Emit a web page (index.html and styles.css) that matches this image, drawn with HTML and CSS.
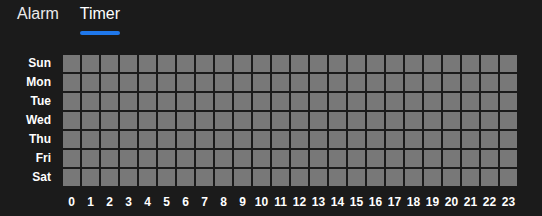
FILE: index.html
```html
<!DOCTYPE html>
<html>
<head>
  <meta charset="UTF-8">
  <meta name="viewport" content="width=device-width, initial-scale=1.0">
  <title>Timer</title>
  <link rel="stylesheet" href="styles.css">
</head>

<body>
  <div class="tabs">
    <div class="tab">Alarm</div>
    <div class="tab active">Timer<span class="tab-bar"></span></div>
  </div>

  <div class="schedule" id="schedule"></div>
  <div class="hours" id="hours"></div>

  <script>
    var days = ["Sun", "Mon", "Tue", "Wed", "Thu", "Fri", "Sat"];
    var schedule = document.getElementById("schedule");
    var hours = document.getElementById("hours");

    days.forEach(function (day) {
      var label = document.createElement("div");
      label.className = "day-label";
      label.textContent = day;
      schedule.appendChild(label);
      for (var h = 0; h < 24; h++) {
        var cell = document.createElement("div");
        cell.className = "slot";
        schedule.appendChild(cell);
      }
    });

    hours.appendChild(document.createElement("div"));
    for (var h = 0; h < 24; h++) {
      var hour = document.createElement("div");
      hour.className = "hour-label";
      hour.textContent = h;
      hours.appendChild(hour);
    }
  </script>
</body>
</html>
```

FILE: styles.css
```css
body {
  font-family: "Liberation Sans", Arial, sans-serif;
  background-color: #1b1b1b;
  color: #fff;
  margin: 0;
  padding: 0;
}

.tabs {
  display: flex;
  gap: 21px;
  padding: 5px 0 0 17px;
}

.tab {
  font-size: 16px;
  line-height: 18px;
  color: #ececec;
  padding-bottom: 12px;
}

.tab.active {
  color: #fff;
  padding-bottom: 0;
}

.tab-bar {
  display: block;
  margin-top: 8px;
  height: 4px;
  border-radius: 2px;
  background-color: #1f78ec;
}

.schedule,
.hours {
  display: grid;
  grid-template-columns: 61px repeat(24, 17px);
  column-gap: 2px;
}

.schedule {
  margin-top: 20px;
  grid-auto-rows: 17px;
  row-gap: 2px;
}

.day-label {
  font-size: 12px;
  font-weight: bold;
  line-height: 17px;
  text-align: right;
  padding-right: 10px;
}

.slot {
  background-color: #787878;
}

.hours {
  margin-top: 9px;
}

.hour-label {
  font-size: 12px;
  font-weight: bold;
  line-height: 14px;
  text-align: center;
  white-space: nowrap;
}
```
